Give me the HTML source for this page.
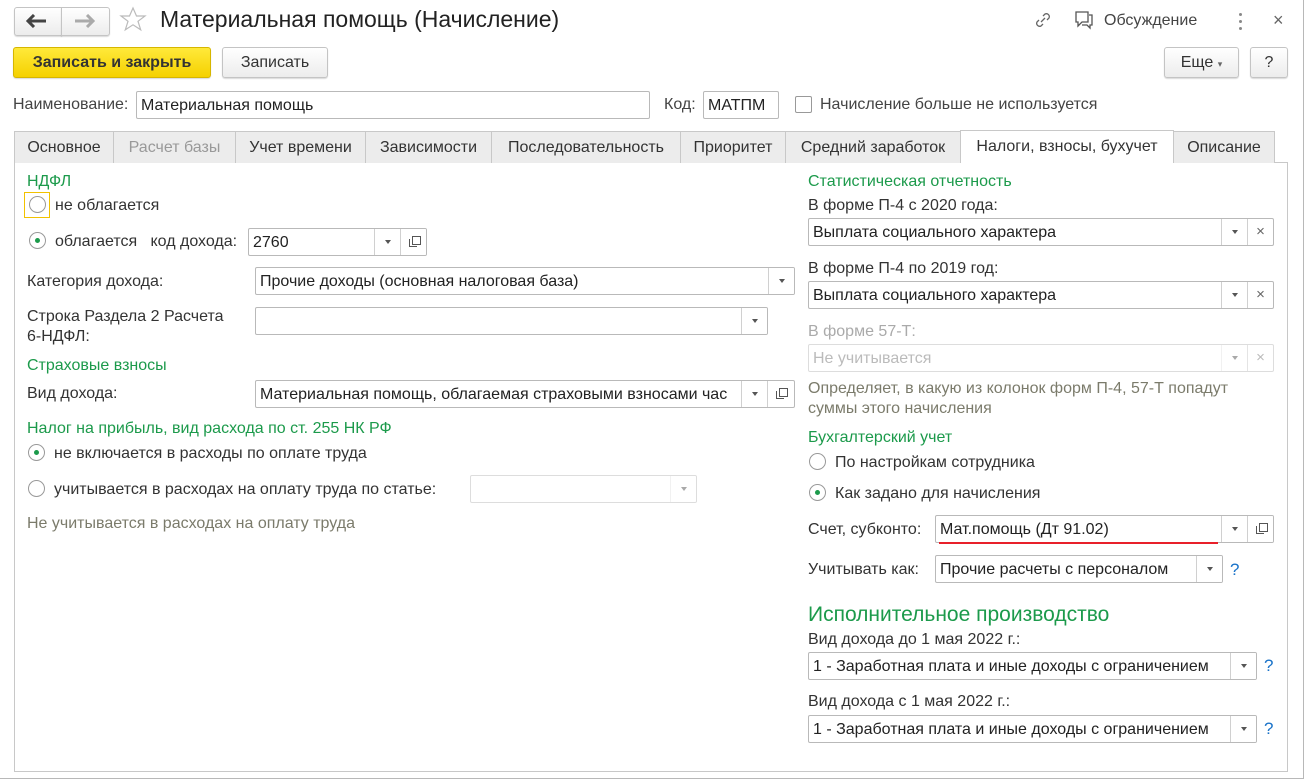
<!DOCTYPE html>
<html><head><meta charset="utf-8"><style>
*{box-sizing:border-box;margin:0;padding:0}
body{width:1304px;height:779px;background:#fff;font-family:"Liberation Sans",Arial,sans-serif;font-size:16px;color:#333;position:relative;overflow:hidden}
.a{position:absolute;white-space:nowrap}
.win{position:absolute;left:0;top:0;width:1304px;height:779px;border:1px solid #b8b8b8;border-left:none;border-top:none}
.btn{position:absolute;border:1px solid #c4c4c4;border-radius:3px;background:linear-gradient(#fff,#ececec);box-shadow:0 1px 1px rgba(0,0,0,.15);text-align:center;line-height:30px;color:#333}
.inp{position:absolute;border:1px solid #b9b9b9;border-radius:2px;background:#fff;height:28px;line-height:28px;padding-left:4px;color:#222;overflow:hidden;white-space:nowrap}
.dd{position:absolute;top:0;width:26px;height:26px;border-left:1px solid #d0d0d0;background:#fff}
.dd:after{content:"";position:absolute;left:10px;top:11px;border-left:3.5px solid transparent;border-right:3.5px solid transparent;border-top:4px solid #555}
.cp{position:absolute;top:0;width:26px;height:26px;border-left:1px solid #d0d0d0;background:#fff}
.cp:before{content:"";position:absolute;left:8px;top:10px;width:7px;height:7px;border:1px solid #555;border-top:none;border-right:none}
.cp:after{content:"";position:absolute;left:11px;top:7px;width:7px;height:7px;border:1px solid #555}
.x{position:absolute;top:0;width:26px;height:26px;border-left:1px solid #d0d0d0;text-align:center;line-height:25px;color:#666;font-size:15px}
.tab{position:absolute;top:131px;height:32px;border:1px solid #c8c8c8;border-bottom:none;background:#ececec;line-height:32px;text-align:center;color:#333}
.g{color:#1c9a4b}
.o{color:#7b7b6b}
.r{position:absolute;width:17px;height:17px;border:1px solid #999;border-radius:50%;background:#fff}
.r.on:after{content:"";position:absolute;left:5px;top:5px;width:5px;height:5px;border-radius:50%;background:#1c9a4b}
.q{position:absolute;color:#1a73c9;font-size:17px}
</style></head><body>
<div class="win"></div>
<div class="btn" style="left:14px;top:7px;width:48px;height:29px;border-radius:3px 0 0 3px"></div>
<div class="btn" style="left:61px;top:7px;width:49px;height:29px;border-radius:0 3px 3px 0"></div>
<svg class="a" style="left:26px;top:14px" width="24" height="14"><path d="M2 7h18M8 1L2 7l6 6" stroke="#444" stroke-width="3" fill="none"/></svg>
<svg class="a" style="left:73px;top:14px" width="24" height="14"><path d="M2 7h18M14 1l6 6-6 6" stroke="#aaa" stroke-width="3" fill="none"/></svg>
<svg class="a" style="left:119px;top:6px" width="28" height="28"><path d="M14 2l3.5 8h8.5l-7 5.3 2.7 8.5L14 18.8 6.3 23.8 9 15.3 2 10h8.5z" fill="none" stroke="#bbb" stroke-width="1.2"/></svg>
<div class="a" style="left:160px;top:6px;font-size:23px;color:#222">Материальная помощь (Начисление)</div>
<svg class="a" style="left:1033px;top:10px" width="20" height="20"><path d="M8 12l4-4M6 10l-2 2a3 3 0 0 0 4 4l2-2M14 10l2-2a3 3 0 0 0-4-4l-2 2" stroke="#666" stroke-width="1.3" fill="none"/></svg>
<svg class="a" style="left:1073px;top:10px" width="22" height="22"><path d="M3 2h12v10H9l-4 4v-4H3z" fill="#fff" stroke="#555" stroke-width="1.3"/><path d="M16 5h3v10h-2v3l-3-3h-5" fill="none" stroke="#555" stroke-width="1.3"/></svg>
<div class="a" style="left:1104px;top:12px;color:#444">Обсуждение</div>
<div class="a" style="left:1239px;top:13px;width:3px"><div style="width:3px;height:3px;background:#888;border-radius:2px;margin-bottom:4px"></div><div style="width:3px;height:3px;background:#888;border-radius:2px;margin-bottom:4px"></div><div style="width:3px;height:3px;background:#888;border-radius:2px"></div></div>
<div class="a" style="left:1273px;top:10px;font-size:18px;color:#666">×</div>
<div class="btn" style="left:13px;top:47px;width:198px;height:31px;background:linear-gradient(#ffe93a,#f5d100);border-color:#d6b600;font-weight:bold;color:#333">Записать и закрыть</div>
<div class="btn" style="left:222px;top:47px;width:106px;height:31px">Записать</div>
<div class="btn" style="left:1164px;top:47px;width:75px;height:31px">Еще <span style="font-size:9px;color:#666">▾</span></div>
<div class="btn" style="left:1250px;top:47px;width:38px;height:31px">?</div>
<div class="a" style="left:13px;top:96px;color:#444">Наименование:</div>
<div class="inp" style="left:136px;top:91px;width:514px">Материальная помощь</div>
<div class="a" style="left:664px;top:96px;color:#444">Код:</div>
<div class="inp" style="left:703px;top:91px;width:76px">МАТПМ</div>
<div class="a" style="left:795px;top:96px;width:17px;height:17px;border:1px solid #999;border-radius:2px"></div>
<div class="a" style="left:820px;top:96px;color:#444">Начисление больше не используется</div>
<div class="a" style="left:14px;top:162px;width:1274px;height:610px;border:1px solid #c8c8c8"></div>
<div class="tab" style="left:14px;width:100px">Основное</div>
<div class="tab" style="left:113px;width:123px;color:#999">Расчет базы</div>
<div class="tab" style="left:235px;width:131px">Учет времени</div>
<div class="tab" style="left:365px;width:127px">Зависимости</div>
<div class="tab" style="left:491px;width:190px">Последовательность</div>
<div class="tab" style="left:680px;width:106px">Приоритет</div>
<div class="tab" style="left:785px;width:176px">Средний заработок</div>
<div class="tab" style="left:960px;width:214px;background:#fff;height:33px;top:130px">Налоги, взносы, бухучет</div>
<div class="tab" style="left:1173px;width:102px">Описание</div>
<div class="a g" style="left:27px;top:173px">НДФЛ</div>
<div class="a" style="left:24px;top:192px;width:26px;height:26px;border:1px solid #f2c200"></div>
<div class="r" style="left:29px;top:196px"></div>
<div class="a" style="left:55px;top:197px">не облагается</div>
<div class="r on" style="left:29px;top:232px"></div>
<div class="a" style="left:55px;top:233px">облагается&nbsp;&nbsp; код дохода:</div>
<div class="inp" style="left:248px;top:228px;width:179px">2760<div class="dd" style="left:125px"></div><div class="cp" style="left:151px"></div></div>
<div class="a" style="left:27px;top:273px">Категория дохода:</div>
<div class="inp" style="left:255px;top:267px;width:540px">Прочие доходы (основная налоговая база)<div class="dd" style="left:512px"></div></div>
<div class="a" style="left:27px;top:307px;line-height:20px">Строка Раздела 2 Расчета<br>6-НДФЛ:</div>
<div class="inp" style="left:255px;top:307px;width:513px"><div class="dd" style="left:485px"></div></div>
<div class="a g" style="left:27px;top:357px">Страховые взносы</div>
<div class="a" style="left:27px;top:385px">Вид дохода:</div>
<div class="inp" style="left:255px;top:380px;width:540px">Материальная помощь, облагаемая страховыми взносами час<div class="dd" style="left:485px"></div><div class="cp" style="left:511px"></div></div>
<div class="a g" style="left:27px;top:420px">Налог на прибыль, вид расхода по ст. 255 НК РФ</div>
<div class="r on" style="left:28px;top:444px"></div>
<div class="a" style="left:54px;top:445px">не включается в расходы по оплате труда</div>
<div class="r" style="left:28px;top:480px"></div>
<div class="a" style="left:54px;top:481px">учитывается в расходах на оплату труда по статье:</div>
<div class="inp" style="left:470px;top:475px;width:227px;border-color:#ddd"><div class="dd" style="left:199px;border-color:#e4e4e4;opacity:.5"></div></div>
<div class="a o" style="left:27px;top:515px">Не учитывается в расходах на оплату труда</div>
<div class="a g" style="left:808px;top:173px">Статистическая отчетность</div>
<div class="a" style="left:808px;top:197px">В форме П-4 с 2020 года:</div>
<div class="inp" style="left:808px;top:218px;width:466px">Выплата социального характера<div class="dd" style="left:412px"></div><div class="x" style="left:438px">×</div></div>
<div class="a" style="left:808px;top:260px">В форме П-4 по 2019 год:</div>
<div class="inp" style="left:808px;top:281px;width:466px">Выплата социального характера<div class="dd" style="left:412px"></div><div class="x" style="left:438px">×</div></div>
<div class="a" style="left:808px;top:323px;color:#aaa">В форме 57-Т:</div>
<div class="inp" style="left:808px;top:344px;width:466px;border-color:#ddd;color:#bbb">Не учитывается<div class="dd" style="left:412px;border-color:#e4e4e4;opacity:.5"></div><div class="x" style="left:438px;border-color:#e4e4e4;color:#bbb">×</div></div>
<div class="a o" style="left:808px;top:379px;line-height:20px">Определяет, в какую из колонок форм П-4, 57-Т попадут<br>суммы этого начисления</div>
<div class="a g" style="left:808px;top:429px">Бухгалтерский учет</div>
<div class="r" style="left:809px;top:453px"></div>
<div class="a" style="left:835px;top:454px">По настройкам сотрудника</div>
<div class="r on" style="left:809px;top:484px"></div>
<div class="a" style="left:835px;top:485px">Как задано для начисления</div>
<div class="a" style="left:808px;top:521px">Счет, субконто:</div>
<div class="inp" style="left:935px;top:515px;width:339px">Мат.помощь (Дт 91.02)<div class="dd" style="left:285px"></div><div class="cp" style="left:311px"></div></div>
<div class="a" style="left:939px;top:542px;width:279px;height:2px;background:#e8202a"></div>
<div class="a" style="left:808px;top:561px">Учитывать как:</div>
<div class="inp" style="left:935px;top:555px;width:288px">Прочие расчеты с персоналом<div class="dd" style="left:260px"></div></div>
<div class="q a" style="left:1230px;top:560px">?</div>
<div class="a g" style="left:808px;top:603px;font-size:21px">Исполнительное производство</div>
<div class="a" style="left:808px;top:631px">Вид дохода до 1 мая 2022 г.:</div>
<div class="inp" style="left:808px;top:652px;width:449px">1 - Заработная плата и иные доходы с ограничением<div class="dd" style="left:421px"></div></div>
<div class="q a" style="left:1264px;top:656px">?</div>
<div class="a" style="left:808px;top:693px">Вид дохода с 1 мая 2022 г.:</div>
<div class="inp" style="left:808px;top:715px;width:449px">1 - Заработная плата и иные доходы с ограничением<div class="dd" style="left:421px"></div></div>
<div class="q a" style="left:1264px;top:719px">?</div>
</body></html>
